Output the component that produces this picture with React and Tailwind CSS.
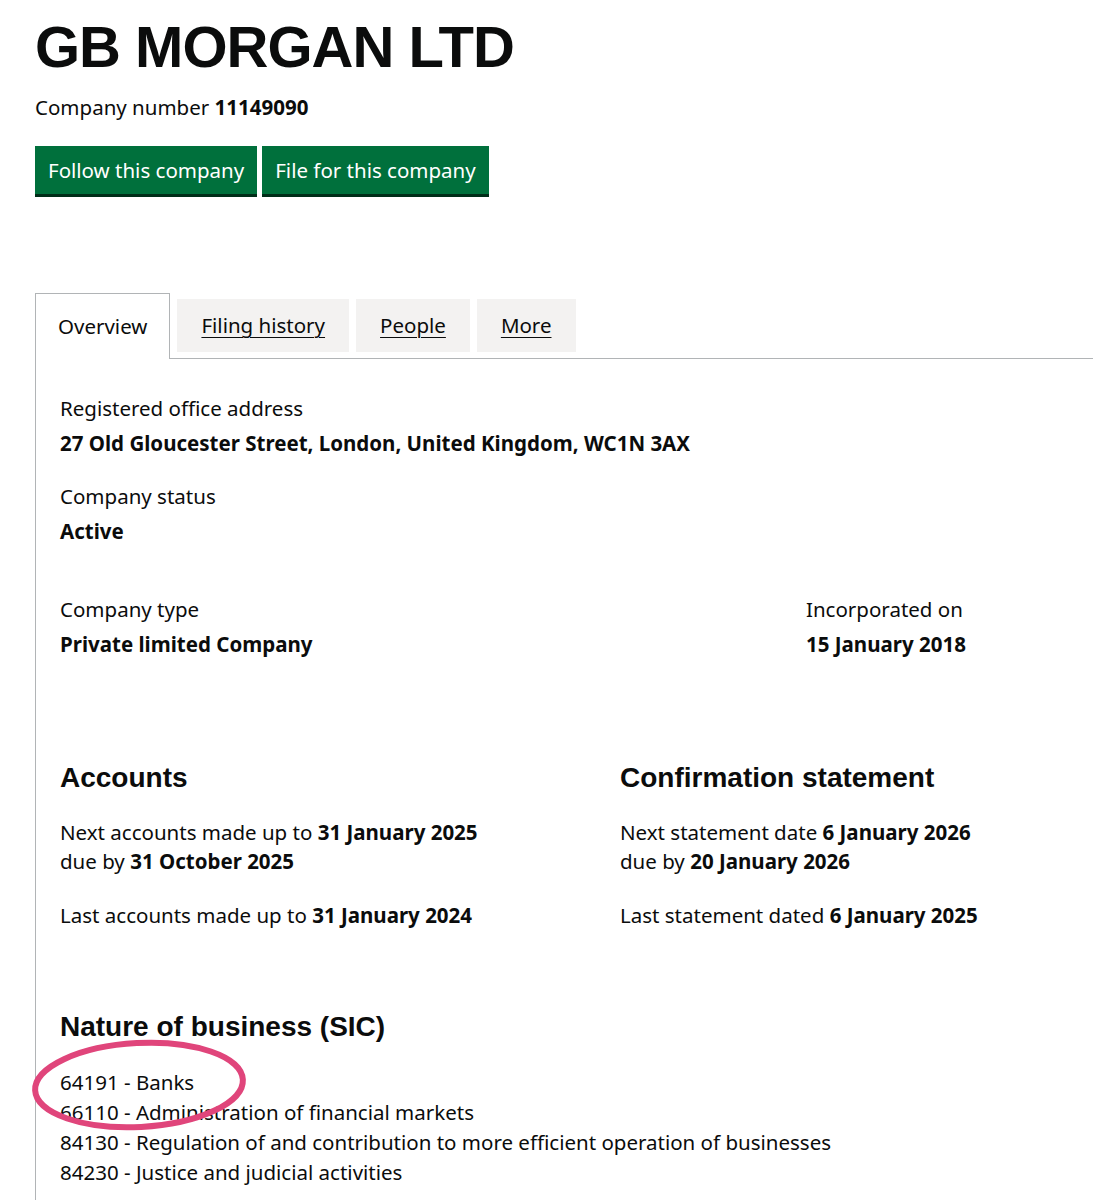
const body = { fontFamily: '"Noto Sans", Arial, sans-serif' };
const head = { fontFamily: '"Liberation Sans", Arial, sans-serif' };

const Tab = ({ children }) => (
  <a
    href="#"
    className="mt-[6px] h-[53px] flex items-center px-[24px] bg-[#f3f2f1] text-[#0b0c0c] underline underline-offset-[4px] decoration-1"
  >
    {children}
  </a>
);

export default function App() {
  return (
    <div className="relative min-h-[1200px] bg-white text-[#0b0c0c] pl-[35px] pt-[18px] overflow-hidden" style={body}>
      <h1 className="text-[58px] leading-none font-bold tracking-[-1px]" style={head}>
        GB MORGAN LTD
      </h1>
      <p className="mt-[19px] text-[20.5px] leading-[24px]">
        Company number <strong className="font-bold">11149090</strong>
      </p>
      <div className="mt-[27px] flex gap-[5px]">
        <button className="h-[48px] px-[13px] bg-[#00703c] text-white text-[20.5px] shadow-[0_3px_0_#002d18] mb-[6px]">
          Follow this company
        </button>
        <button className="h-[48px] px-[13px] bg-[#00703c] text-white text-[20.5px] shadow-[0_3px_0_#002d18] mb-[6px]">
          File for this company
        </button>
      </div>

      <div className="mt-[93px] flex gap-[7px] text-[20.5px] relative z-10">
        <div className="h-[66px] flex items-center px-[22px] pb-[1px] bg-white border border-b-0 border-[#b1b4b6]">
          Overview
        </div>
        <Tab>Filing history</Tab>
        <Tab>People</Tab>
        <Tab>More</Tab>
      </div>

      <div className="-mt-[1px] border-l border-t border-[#b1b4b6] pl-[24px] pt-[36px] pb-[60px] text-[20.5px]">
        <dl>
          <dt className="leading-[26px]">Registered office address</dt>
          <dd className="mt-[9px] font-bold leading-[26px]">27 Old Gloucester Street, London, United Kingdom, WC1N 3AX</dd>
          <dt className="mt-[27px] leading-[26px]">Company status</dt>
          <dd className="mt-[9px] font-bold leading-[26px]">Active</dd>
        </dl>

        <div className="mt-[52px] flex">
          <dl className="w-[746px]">
            <dt className="leading-[26px]">Company type</dt>
            <dd className="mt-[9px] font-bold leading-[26px]">Private limited Company</dd>
          </dl>
          <dl>
            <dt className="leading-[26px]">Incorporated on</dt>
            <dd className="mt-[9px] font-bold leading-[26px]">15 January 2018</dd>
          </dl>
        </div>

        <div className="mt-[105px] grid grid-cols-[560px_1fr]">
          <div>
            <h2 className="text-[28px] leading-[32px] font-bold" style={head}>
              Accounts
            </h2>
            <p className="mt-[24px] leading-[29px]">
              Next accounts made up to <strong>31 January 2025</strong>
              <br />
              due by <strong>31 October 2025</strong>
            </p>
            <p className="mt-[25px] leading-[29px]">
              Last accounts made up to <strong>31 January 2024</strong>
            </p>
          </div>
          <div>
            <h2 className="text-[28px] leading-[32px] font-bold" style={head}>
              Confirmation statement
            </h2>
            <p className="mt-[24px] leading-[29px]">
              Next statement date <strong>6 January 2026</strong>
              <br />
              due by <strong>20 January 2026</strong>
            </p>
            <p className="mt-[25px] leading-[29px]">
              Last statement dated <strong>6 January 2025</strong>
            </p>
          </div>
        </div>

        <h2 className="mt-[81px] text-[28px] leading-[32px] font-bold" style={head}>
          Nature of business (SIC)
        </h2>
        <ul className="mt-[24px] leading-[30px]">
          <li>64191 - Banks</li>
          <li>66110 - Administration of financial markets</li>
          <li>84130 - Regulation of and contribution to more efficient operation of businesses</li>
          <li>84230 - Justice and judicial activities</li>
        </ul>
      </div>

      <svg className="absolute left-[28px] top-[1036px] pointer-events-none" width="222" height="98" viewBox="0 0 222 98">
        <ellipse cx="111" cy="49" rx="104" ry="42" fill="none" stroke="#e0457b" strokeWidth="6" transform="rotate(-3 111 49)" />
      </svg>
    </div>
  );
}
